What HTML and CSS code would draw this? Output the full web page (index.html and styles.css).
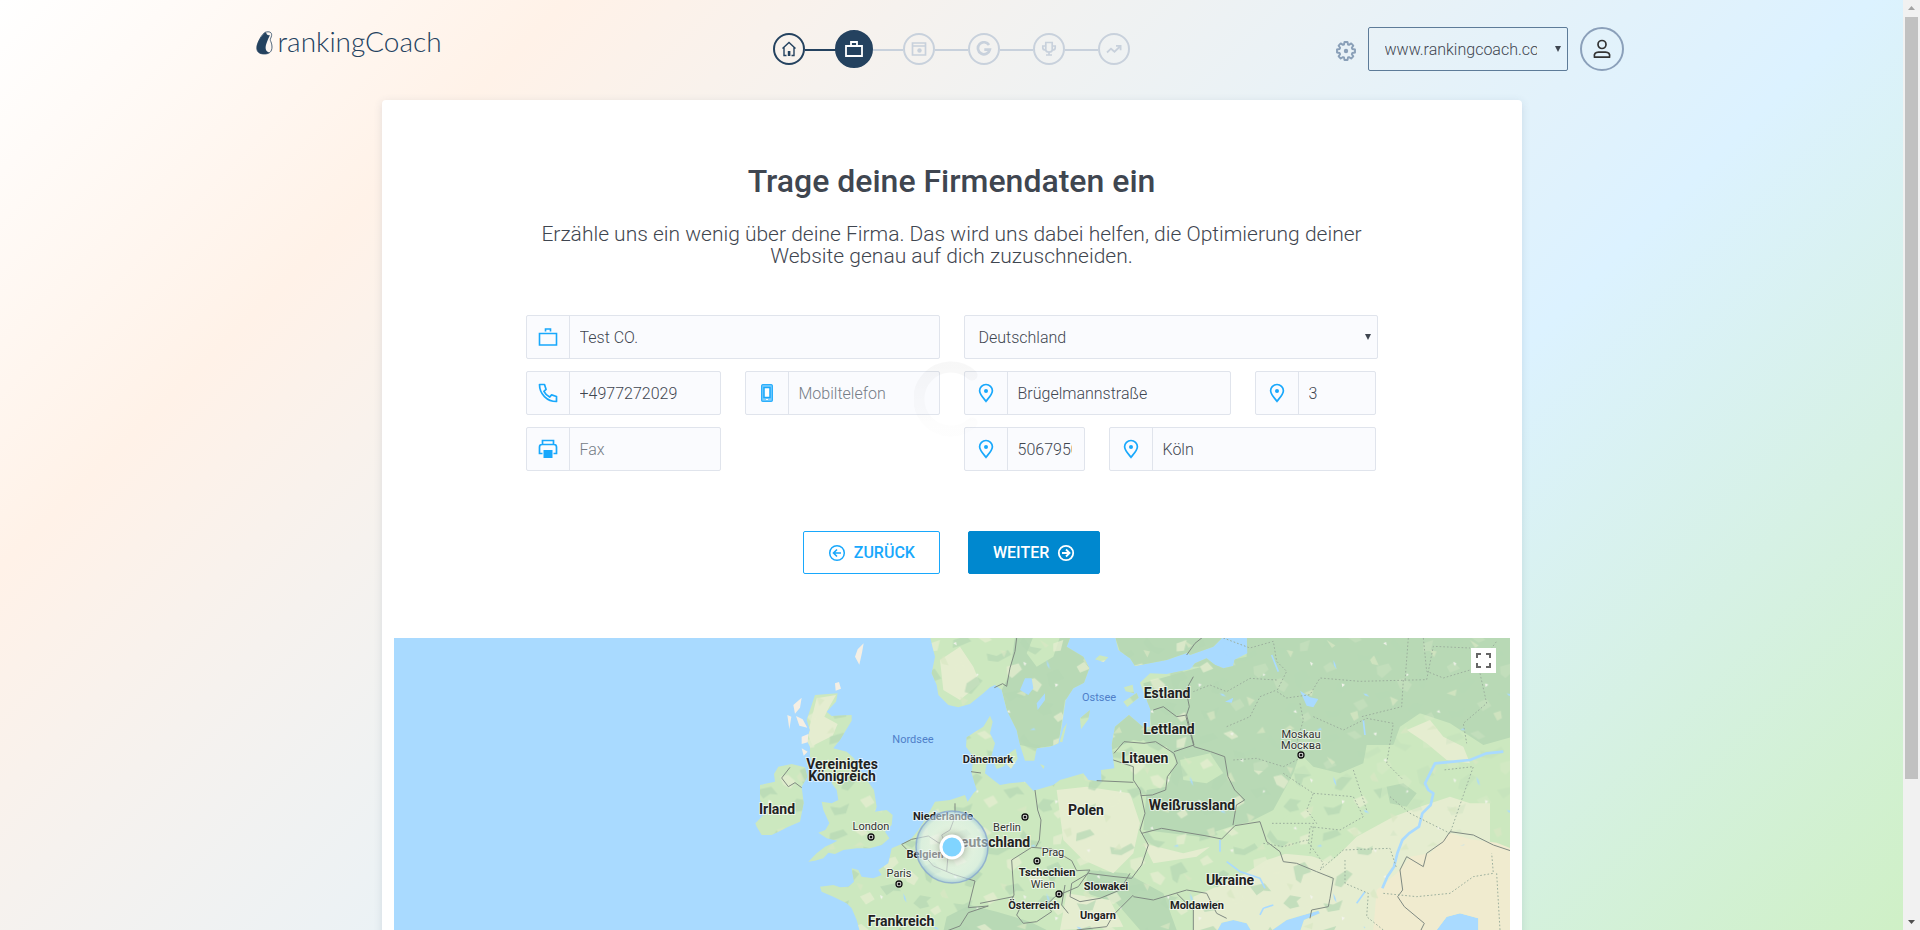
FILE: index.html
```html
<!DOCTYPE html>
<html lang="de">
<head>
<meta charset="utf-8">
<meta name="viewport" content="width=device-width, initial-scale=1">
<title>rankingCoach – Firmendaten</title>
<link rel="stylesheet" href="styles.css">
</head>
<body>
<svg class="sprite" aria-hidden="true">
  <symbol id="briefcase" viewBox="0 0 20 20"><path d="M1.500 6.500h17v11.500h-17z M7.500 4.500V2h5v2.500" fill="none" stroke="currentColor" stroke-width="1.600"/></symbol>
  <symbol id="phone" viewBox="0 0 20 20"><path d="M1.500 1.500h5l1.600 4.900-2.200 2c1.200 2.400 3.200 4.400 5.700 5.700l2-2.200 4.900 1.600v5C9 18.500 1.500 11 1.500 1.500z" fill="none" stroke="currentColor" stroke-width="1.700" stroke-linejoin="round"/></symbol>
  <symbol id="mobile" viewBox="0 0 20 20"><path d="M5.500 1h9a1.500 1.500 0 0 1 1.500 1.500v15a1.500 1.500 0 0 1-1.500 1.500h-9A1.500 1.500 0 0 1 4 17.500v-15A1.500 1.500 0 0 1 5.500 1z" fill="currentColor" opacity=".55"/><rect x="4.700" y="1.700" width="10.600" height="16.600" rx="1" fill="none" stroke="currentColor"/><rect x="7" y="4.500" width="6" height="10" fill="#fff" stroke="currentColor" stroke-width="1.500"/><rect x="9" y="16" width="2" height="1" fill="#fff"/></symbol>
  <symbol id="printer" viewBox="0 0 20 20"><path d="M4.500 5V1.500h11V5 M4.500 14.500h-3V8q0-2.500 2.500-2.500h12q2.500 0 2.500 2.500v6.500h-3" fill="none" stroke="currentColor" stroke-width="1.700"/><path d="M5.500 11h9v8h-9z" fill="currentColor"/></symbol>
  <symbol id="pin" viewBox="0 0 20 20"><path d="M10 18.300C6.500 14 3.600 11 3.600 7.700a6.400 6.200 0 0 1 12.800 0C16.400 11 13.500 14 10 18.300z" fill="none" stroke="currentColor" stroke-width="1.700"/><circle cx="10" cy="8" r="2" fill="currentColor"/></symbol>
</svg>

<div class="page">
  <header class="header">
    <a class="logo" href="#">
      <svg class="logo-mark" viewBox="0 0 17 24" aria-hidden="true"><path d="M9.500 1.200C13 .2 16 1 15.600 4.500c-.2 2-1.800 3.500-1.200 5 .5 1.300 1.600 3.500 1.600 6.500 0 4.500-2.500 7-7.600 7C3.500 23 .6 21 .8 16.500 1 12 6 2.500 9.500 1.200z" fill="#fdf6f1" stroke="#24425f" stroke-width=".8"/><path d="M9.500 1.200C7 2.500.8 11 .8 16.500.8 21.500 4 23 8 23c2.500 0 4-.5 5.200-1.600-3.200-.7-4.400-4-3-8.200C11.300 10 12.800 6.500 14 4c-1 .4-2.500.2-3.200-.8-.4-.7-.2-1.500-1.300-2z" fill="#24425f"/></svg>
      <span>rankingCoach</span>
    </a>

    <ol class="steps" aria-label="Einrichtung">
      <li class="step step-done"><svg viewBox="0 0 16 16" role="img" aria-label="Start"><path d="M1.500 7.500 8 1.500l6.500 6 M3 6.500v8h2.500 M13 6.500v8h-2.500" fill="none" stroke="currentColor" stroke-width="1.400"/><path d="M6.800 10h2.600v5H6.800z" fill="currentColor"/></svg></li>
      <li class="step step-active" aria-current="step"><svg viewBox="0 0 20 20" role="img" aria-label="Firma"><path d="M2 7h16v10H2z M7 6V3h6v3" fill="none" stroke="currentColor" stroke-width="1.800"/></svg></li>
      <li class="step"><svg viewBox="0 0 16 16" role="img" aria-label="Website"><path d="M1.500 2h13v12h-13z M1.500 5h13" fill="none" stroke="currentColor" stroke-width="1.700"/><circle cx="8.500" cy="9.500" r="2.200" fill="currentColor"/></svg></li>
      <li class="step"><svg viewBox="0 0 16 16" role="img" aria-label="Suche"><path d="M13 4a6 6 0 1 0 .8 4.600H8.300" fill="none" stroke="currentColor" stroke-width="2.700"/></svg></li>
      <li class="step"><svg viewBox="0 0 16 16" role="img" aria-label="Ziele"><path d="M4.800 1.500h6.400V9q0 2-3.200 2T4.800 9z M4.500 5H1.800v2q0 2 3 2 M11.500 5h2.700v2q0 2-3 2 M8 11v3 M5 14h6" fill="none" stroke="currentColor" stroke-width="1.700"/></svg></li>
      <li class="step"><svg viewBox="0 0 16 16" role="img" aria-label="Ergebnis"><path d="M1 11.500 5 7.700l3.500 3L14 5.500 M10 4.800h4.600v4.500" fill="none" stroke="currentColor" stroke-width="1.800"/></svg></li>
    </ol>

    <div class="account">
      <button class="gear" type="button" aria-label="Einstellungen">
        <svg viewBox="0 0 20 20" aria-hidden="true"><path d="M8.500 1h3l.5 2.500 1 .4 2.200-1.500 2.100 2.200-1.500 2.200.5 1.200 2.700.5v3l-2.700.5-.5 1.200 1.500 2.200-2.100 2.100-2.200-1.400-1 .4-.5 2.500h-3L8 16.500l-1.100-.4-2.200 1.400-2.100-2.100 1.500-2.200-.5-1.200L1 11.500v-3L3.600 8l.5-1.200-1.500-2.200 2.100-2.200 2.200 1.500 1.100-.4z" fill="none" stroke="currentColor" stroke-width="1.900" stroke-linejoin="round"/><circle cx="10" cy="10" r="2.200" fill="currentColor"/></svg>
      </button>
      <div class="select-wrap">
        <select class="site-select" aria-label="Website"><option>www.rankingcoach.com</option></select>
      </div>
      <button class="user" type="button" aria-label="Konto">
        <svg viewBox="0 0 20 20" aria-hidden="true"><circle cx="10" cy="5.500" r="4" fill="none" stroke="currentColor" stroke-width="1.700"/><path d="M2.500 18.200c-.8-3.400 1-5 4-5h7c3 0 4.800 1.600 4 5z" fill="none" stroke="currentColor" stroke-width="1.700"/></svg>
      </button>
    </div>
  </header>

  <main class="card">
    <h1 class="title">Trage deine Firmendaten ein</h1>
    <p class="intro">Erzähle uns ein wenig über deine Firma. Das wird uns dabei helfen, die Optimierung deiner Website genau auf dich zuzuschneiden.</p>

    <form class="form">
      <div class="columns">
        <div class="column contact">
          <label class="field wide"><span class="icon"><svg><use href="#briefcase"/></svg></span><input type="text" aria-label="Firma" value="Test CO."></label>
          <label class="field"><span class="icon"><svg><use href="#phone"/></svg></span><input type="tel" aria-label="Telefon" value="+4977272029"></label>
          <label class="field"><span class="icon"><svg><use href="#mobile"/></svg></span><input type="tel" aria-label="Mobiltelefon" placeholder="Mobiltelefon"></label>
          <label class="field"><span class="icon"><svg><use href="#printer"/></svg></span><input type="tel" aria-label="Fax" placeholder="Fax"></label>
        </div>
        <div class="column address">
          <div class="select-wrap">
            <select class="country-select" aria-label="Land"><option>Deutschland</option></select>
          </div>
          <div class="address-row street-row">
            <label class="field"><span class="icon"><svg><use href="#pin"/></svg></span><input type="text" aria-label="Straße" value="Brügelmannstraße"></label>
            <label class="field"><span class="icon"><svg><use href="#pin"/></svg></span><input type="text" aria-label="Hausnummer" value="3"></label>
          </div>
          <div class="address-row town-row">
            <label class="field"><span class="icon"><svg><use href="#pin"/></svg></span><input type="text" aria-label="Postleitzahl" value="5067950"></label>
            <label class="field"><span class="icon"><svg><use href="#pin"/></svg></span><input type="text" aria-label="Ort" value="Köln"></label>
          </div>
        </div>
        <svg class="spinner" viewBox="0 0 76 76" aria-hidden="true">
          <defs><linearGradient id="fade" x1="0" y1="0" x2="0" y2="1"><stop offset="0" stop-opacity=".03"/><stop offset="1" stop-opacity=".006"/></linearGradient></defs>
          <path d="M58 14A32 32 0 1 0 58 62" fill="none" stroke="url(#fade)" stroke-width="11" stroke-linecap="round"/>
        </svg>
      </div>

      <div class="actions">
        <button class="btn btn-outline" type="button">
          <svg viewBox="0 0 18 18" aria-hidden="true"><circle cx="9" cy="9" r="7.300" fill="none" stroke="currentColor" stroke-width="1.500"/><path d="M13 9H5.500 M9 5.500 5.500 9 9 12.500" fill="none" stroke="currentColor" stroke-width="1.600"/></svg>
          <span>ZURÜCK</span>
        </button>
        <button class="btn btn-primary" type="submit">
          <span>WEITER</span>
          <svg viewBox="0 0 18 18" aria-hidden="true"><circle cx="9" cy="9" r="7.200" fill="none" stroke="currentColor" stroke-width="1.800"/><path d="M5 9h7.500 M9 5.500l3.500 3.500L9 12.500" fill="none" stroke="currentColor" stroke-width="1.900"/></svg>
        </button>
      </div>
    </form>

    <div class="map">
      <svg class="map-canvas" viewBox="0 0 1116 418" preserveAspectRatio="xMidYMin slice" role="img" aria-label="Karte von Europa">
        <defs>
          <pattern id="shards" width="370" height="290" patternUnits="userSpaceOnUse">
            <path fill="#b6d8b4" opacity=".7" d="M20 30l40-12 14 16-30 12-26 8zM120 70l30 8 34-18 10 14-40 22-30-4zM230 20l22 30 34 6-20 18-30-16-16-20zM300 130l34-14 20 30-24 8-8 26-14-10zM60 160l30-20 18 12-34 40-20-6zM170 190l44-10 20 24-24-2-20 14zM20 240l30 4 28-14-10 30-34 6zM270 240l20-24 34 6-14 12 8 16-28 6z"/>
            <path fill="#e5edd0" opacity=".75" d="M90 20l24-8 22 18-20 8zM180 110l36-10 10 18-30 26-14-12zM20 110l22-14 18 20-30 12zM240 150l24-6 22 20-14 22-22-12zM110 220l30-14 14 22-26 16zM320 40l30-10-8 32-22 2zM320 260l24-14 10 18-20 12z"/>
          </pattern>
          <pattern id="flecks" width="430" height="350" patternUnits="userSpaceOnUse">
            <path fill="#d9e8c4" opacity=".7" d="M40 60l20 4-8 18zM160 30l26 16-10 8zM290 90l12-14 14 30-20-4zM90 190l30-12-4 20zM230 250l22-8 4 22-14 8zM350 200l24 10-16 18zM30 300l20-14 14 10zM380 310l18-20 8 18z"/>
            <path fill="#f4f4ee" d="M110 95l9 5-5 8zM330 40l8-4 2 10zM205 160l10 4-8 7zM60 245l7-5 4 9zM300 310l10-3-2 10zM400 130l6 4-7 5z"/>
            <path fill="#a9daff" d="M180 90l6 12 4 16-8-12zM270 190l10 2 8 8-12-3zM130 300l12-6 4 6z"/>
          </pattern>
          <path id="land" d="M480 905L470 870 455 835 440 820 400 800 365 785 360 770 400 765 420 772 445 770 462 755 455 715 475 720 485 740 520 745 545 735 535 720 565 700 575 655 610 640 635 625 655 600 680 560 705 515 750 510 795 495 803 515 820 490 830 480 815 430 820 380 798 350 800 322 850 290 870 257 878 275 870 310 885 340 875 375 860 400 855 430 880 450 900 465 930 460 975 455 1000 482 1060 465 1080 450 1150 430 1165 450 1205 455 1203 420 1243 415 1235 345 1245 290 1287 255 1330 292 1350 290 1352 240 1328 180 1320 158 1350 130 1400 132 1470 118 1485 100 1520 85 1545 105 1570 115 1600 108 1605 80 1640 70 1640 20H2440V905H2335L2335 865 2280 850 2240 860 2210 900 1800 905 1812 870 1860 850 1855 842 1810 855 1760 870 1710 905H1655L1640 880 1600 870 1565 878 1550 905z
            M690 20L705 80 695 130 710 165 715 195 745 225 775 232 810 222 850 190 870 172 885 165 905 180 920 240 950 300 960 345 975 392 1003 392 1010 355 1050 350 1075 340 1085 290 1097 210 1120 175 1152 158 1168 115 1150 80 1100 50 1112 20z
            M1245 20L1255 60 1290 85 1305 108 1400 90 1462 68 1470 75 1540 50 1570 20z
            M345 195L413 190 408 215 380 245 395 258 455 255 455 272 435 305 420 330 400 355 440 365 462 385 480 420 500 450 522 480 530 530 525 545 560 540 578 555 575 585 555 605 568 625 545 645 510 655 470 655 430 660 405 672 385 668 370 685 345 692 325 695 350 670 375 650 398 640 412 632 380 625 355 608 376 600 388 580 370 540 365 515 395 520 415 510 410 480 395 460 400 440 360 430 345 400 330 380 330 350 320 330 330 300 320 270 330 240z
            M235 410L275 402 315 412 322 440 305 470 311 520 300 575 265 590 215 615 185 615 170 590 166 580 200 545 180 510 180 465 225 455 222 432z
            M1140 265l30-25-5 28-22 30zM880 395l25-18 10 30-25 10zM925 372l22-16 6 30-20 30-14-14zM1272 172l26-8 4 26-25-6zM1270 215l40-26 6 14-34 28zM1185 88l14-12 26 6-14 14z"/>
          <clipPath id="landclip"><use href="#land"/></clipPath>
          <radialGradient id="halo"><stop offset=".3" stop-color="#fff" stop-opacity=".5"/><stop offset=".86" stop-color="#e6f5f5" stop-opacity=".55"/><stop offset="1" stop-color="#9cc4e4" stop-opacity=".6"/></radialGradient>
        </defs>
        <rect width="1116" height="418" fill="#a9daff"/>
        <g transform="translate(306 -8) scale(.33333)">
          <use href="#land" fill="#cce8bf"/>
          <path fill="#cce8bf" d="M1500 900h940v400H360l90-400z"/>
          <g clip-path="url(#landclip)">
            <path fill="#b8d9b5" d="M1330 160L1470 120 1545 100 1640 80 1640 20H2440V320L2350 345 2250 280 2160 250 2100 290 2080 345 2000 345 1990 400 1920 430 1840 410 1800 370 1780 430 1720 540 1650 575 1590 590 1500 620 1330 600 1340 480 1400 470 1430 390 1400 350 1300 330 1235 360V280l50-30 50 40h20z"/>
            <path fill="#b8d9b5" d="M945 20H1180V170L1095 210 1075 345 1010 355 960 345 920 240 905 180 930 130zM1245 20h330v90h-300zM1160 720l120 10 110 60 40 110H1320l-70-80-90-30zM740 860l70-35 80 20 100 30 60 30H730zM2060 470l50-10 40 30-30 40-50-10z"/>
            <path fill="#e5edd0" d="M1070 480l90-10 130 20 30 90-20 90-60 60-90-40-60-60zM1100 790l130 20 40 80-190 10zM1330 640l120 30 80-20-40 30-130 20zM1480 800l140-60 80-50 90-30 100 40 80-80 110-60 80-30 90-30 60 20h60V900H1480zM350 205l58-10-20 35-15 30 40 22-15 35-60 30-15-35zM720 90l60-40 40 60 20 50-60 50-50-30zM2120 300l70-30 40 50 60 30 20 50-70-10-60-50zM1160 100l60-10 30 40-60 10z"/>
            <path fill="#cce8bf" d="M1000 20h80l-20 60-50 30-30-40zM1250 370l80-40 80 30 10 50-40 60-90 10zM1440 390l90-20 40 60-50 30-70-10zM1700 600l90-60 120 40 40 60-100 40-110-10z"/>
            <path fill="#f0ebcf" d="M2250 608l60 20 80 10 50 20V900H2020l10-120 60-50 40-50 60-10z"/>
            <path fill="url(#shards)" d="M0 0h1500L1650 420 2050 450 2010 700 1900 905H0z"/>
            <path fill="url(#shards)" opacity=".3" d="M1500 0h940v600l-430 20 40-170-400-30z"/>
            <path fill="url(#flecks)" d="M0 0h2440v620l-350 60-100 225H0z"/>
          </g>
          <path fill="#a9daff" d="M960 180l15-35 20 0 5 30-15 20zM1010 220l25-30 0 20-22 30zM1800 182l30 20 25 5-15 25-20-5zM1570 20h70l2 50-40 20-30-20-5-30zM1575 215l25-12-5 15z"/>
          <path fill="#f5efe4" d="M465 80l8-22 18-18-5 28-8 36zM280 225l25-22-5 30-15 18zM262 255l12 5-6 38zM288 258l20 10 14 25-24-6zM305 320l20-8-2 25-18 5zM405 160l12-4 6 20-16 6zM305 355l18 10-12 12z"/>
          <path fill="#cce8bf" d="M1079 335l12-40 10-16-14 58zM1020 402l14 6-4 9z"/>
          <g fill="none" stroke="#a9daff" stroke-width="8" stroke-linejoin="round"><path d="M2410 365l-50 5-50 20-50 5-55 5-15 30-15 30 10 20 15 10-8 35-25 25-10 40-30 20-20 20-15 40-10 40-20 30-15 35" /><path d="M1560 630v35M1580 695l40 30 60 20 15 30M1680 855l10-20 30-10M1990 270l5 45M1715 75l20 50M1970 820l25-35" stroke-width="5"/></g>
          <g fill="none" stroke="#7f8a82" stroke-width="3" stroke-linejoin="round">
            <path d="M950 24l-5 40-15 50-10 55-12-8-25 12M1005 480l8 60 10 30-5 60-10 20M935 690l60-38 60 5 60 35 15 30 40-2-35 50-70 30-25 25 15 20-45 30-40 5-20-25 12-25-30-15 10-20zM1095 765l-10 60 20 25M1165 730l80 10 50 5 30-40 20-60-25-45 15-50-15-70-20-30 0-40-60-20M1190 452l110 5M1242 370l30-35 60 5 35-5 55 35 10 30-30 40-5 40-40 15-35 2M1360 240l30-10 40 30 30-5 22 90-60 20M1480 140l-22 40 10 50-10 30 24 90 50 15 42 15 10 60 20 40 30 30-25 15-10 60M1325 610l60-15 70 12 60 10 50 10 40-40 75-12 20 60 40 30 10 30 40 5 60 25 50 20-10 60-5 25-50 10-5 25M2440 665l-60-20-60-30-70-10-20 30-50 35-10 40-50-30-20 40 8 60-15 20 20 30 60 50-10 20 40 20"/>
            <path d="M1165 730l-50 30-5 40 30 15 60-10 60-25 30-50M1300 795l-60 60-20 35-90 10M1300 800l60 10 100-30 60 10 30 60 30 15M1430 790l50 50 0 60M635 628l50-10 30 20 40 10M635 628l-30 15 20 20 40 5 35 40 60 25 65 20-20 80 60-5-60 20-25 40-40 15-20 30M765 520v40l-15 40-25 15 20 50-5 60M940 800l-100 20M270 412l-25 32 20 26 20-12 20 15M813 425l30 4M1460 75l25-35 25-20"/>
          </g>
          <g fill="none" stroke="#9caf9d" stroke-width="3" stroke-dasharray="5 6">
            <path d="M1570 24l80 30 70-20 10 60 30 30-30 60 30 20 70-10 30-50 120 10 200-5 20-100 110 5M1730 150l-80-5-70 40-50-20-50 20M1580 290l70-30 30-60 50-20M1800 220l10 50-20 70 20 40-60 30-80-25-70 5M1840 260l90 40 70-35 80 15-20 120 50 50M2110 150l-5 80-120 30M2125 24l-10 130M2170 24l10 100 50 20 100-30 60-80M2340 130l20 90-70 60 10 60M1750 430l90 60-20 50 30 40-140 0M1840 490l120 10 30 60-70 40-90-10-5 50M1960 420l40 120M2070 500l60 50 120 60 70-200-90 10M1690 640l60 10 70-20 50 70-10 20 70-60 140-5 20 60M1935 690l0 70 70 30-5 70 50 40M2050 790l100 10 100-10 70-50 60-10-5-60M2390 730l10 170M1840 590l-10 80"/>
          </g>
        </g>
        <g class="places">
          <g class="country">
            <text x="448" y="131">Vereinigtes</text><text x="448" y="143">Königreich</text><text x="383" y="176">Irland</text><text x="507" y="288">Frankreich</text><text x="597" y="209">Deutschland</text><text x="692" y="177">Polen</text><text x="773" y="60">Estland</text><text x="775" y="96">Lettland</text><text x="751" y="125">Litauen</text><text x="798" y="172">Weißrussland</text><text x="836" y="247">Ukraine</text>
          </g>
          <g class="country small">
            <text x="594" y="125">Dänemark</text><text x="549" y="182">Niederlande</text><text x="531" y="220">Belgien</text><text x="653" y="238">Tschechien</text><text x="640" y="271">Österreich</text><text x="712" y="252">Slowakei</text><text x="704" y="281">Ungarn</text><text x="803" y="271">Moldawien</text>
          </g>
          <g class="city">
            <text x="477" y="192">London</text><text x="505" y="239">Paris</text><text x="613" y="193">Berlin</text><text x="659" y="218">Prag</text><text x="649" y="250">Wien</text><text x="907" y="100">Moskau</text><text x="907" y="111">Москва</text>
          </g>
          <g class="sea"><text x="519" y="105">Nordsee</text><text x="705" y="63">Ostsee</text></g>
          <g fill="#fff" stroke="#111" stroke-width="1.300"><circle cx="477" cy="199" r="3"/><circle cx="505" cy="246" r="3"/><circle cx="631" cy="179" r="3"/><circle cx="643" cy="223" r="3"/><circle cx="665" cy="256" r="3"/><circle cx="907" cy="117" r="3"/></g>
          <g fill="#111"><circle cx="477" cy="199" r="1.500"/><circle cx="505" cy="246" r="1.500"/><circle cx="631" cy="179" r="1.500"/><circle cx="643" cy="223" r="1.500"/><circle cx="665" cy="256" r="1.500"/><circle cx="907" cy="117" r="1.500"/></g>
        </g>
        <circle cx="558" cy="209" r="36" fill="url(#halo)" stroke="#7f9fd0" stroke-opacity=".7" stroke-width="1.500"/>
        <circle class="marker" cx="558" cy="209" r="11" fill="#80d4ff" stroke="#fff" stroke-width="3"/>
      </svg>
      <button class="fullscreen" type="button" aria-label="Vollbild">
        <svg viewBox="0 0 15 15" aria-hidden="true"><path d="M1 5V1h4 M10 1h4v4 M14 10v4h-4 M5 14H1v-4" fill="none" stroke="#666" stroke-width="2"/></svg>
      </button>
    </div>
  </main>
</div>

<div class="scrollbar" aria-hidden="true">
  <svg viewBox="0 0 17 17"><path d="M5 10l3.500-4 3.500 4z" fill="#a3a3a3"/></svg>
  <div class="track"><div class="thumb"></div></div>
  <svg viewBox="0 0 17 17"><path d="M5 7l3.500 4L12 7z" fill="#505050"/></svg>
</div>
</body>
</html>
```
FILE: styles.css
```css
* { box-sizing: border-box; }

body {
  margin: 0;
  height: 100vh;
  display: flex;
  overflow: hidden;
  font-family: Roboto, "Liberation Sans", sans-serif;
  font-weight: 300;
  font-size: 16px;
  color: #3f4650;
}

button, input, select { font: inherit; color: inherit; }
button { cursor: pointer; }
.sprite { position: absolute; width: 0; height: 0; }

.page {
  flex: 1;
  min-width: 0;
  overflow: hidden;
  background: linear-gradient(135deg, #fff 0%, #fff2e8 20%, #dcf2ff 66%, #cff0c6 100%);
}

/* Header */
.header {
  display: grid;
  grid-template-columns: 1fr auto 1fr;
  align-items: start;
  max-width: 1440px;
  height: 100px;
  margin: 0 auto;
  padding: 27px 24px 0;
}

.logo {
  display: flex;
  align-items: center;
  gap: 5px;
  height: 32px;
  color: #24425f;
  font-family: Lato, sans-serif;
  font-weight: 300;
  font-size: 28px;
  line-height: 32px;
  text-decoration: none;
}
.logo span { padding-bottom: 4px; }
.logo-mark { width: 17px; height: 24px; }

.steps {
  display: flex;
  gap: 33px;
  margin: 6px 0 0;
  padding: 0;
  list-style: none;
}
.step {
  position: relative;
  display: flex;
  align-items: center;
  justify-content: center;
  width: 32px;
  height: 32px;
  border: 2px solid;
  border-radius: 50%;
  color: #c8d1dc;
}
.step svg { width: 16px; height: 16px; }
.step:not(:last-child)::after {
  content: "";
  position: absolute;
  left: 30px;
  top: 14px;
  width: 33px;
  height: 2px;
  background: currentColor;
}
.step-done { color: #24425f; }
.step-active {
  z-index: 1;
  width: 38px;
  height: 38px;
  margin: -3px;
  border-color: #24425f;
  background: #24425f;
  color: #fff;
}
.step-active svg { width: 20px; height: 20px; }
.step.step-active::after { left: 36px; top: 17px; width: 30px; background: #c8d1dc; }

.account {
  display: flex;
  justify-content: flex-end;
  align-items: center;
  gap: 12px;
  padding-right: 24px;
}
.gear {
  display: flex;
  margin-top: 3px;
  padding: 0;
  border: 0;
  background: none;
  color: #8aa0b8;
}
.gear svg { width: 20px; height: 20px; }

.select-wrap { position: relative; }
.select-wrap::after {
  content: "";
  position: absolute;
  right: 7px;
  top: 19px;
  border: 3px solid transparent;
  border-top: 6px solid #3f4650;
  border-bottom: 0;
  pointer-events: none;
}
.select-wrap select {
  appearance: none;
  display: block;
  width: 100%;
  height: 44px;
  border: 1px solid #e0e4ec;
  border-radius: 2px;
  background: #fafbfe;
  padding: 0 14px;
}
.select-wrap .site-select {
  width: 200px;
  padding: 0 30px 0 16px;
  border-color: #5d7b98;
  background: transparent;
}

.user {
  display: flex;
  align-items: center;
  justify-content: center;
  width: 44px;
  height: 44px;
  padding: 0;
  border: 2px solid #8ba0ba;
  border-radius: 50%;
  background: none;
  color: #333;
}
.user svg { width: 20px; height: 20px; }

/* Card */
.card {
  max-width: 1140px;
  margin: 0 auto;
  padding: 63px 12px 12px;
  border-radius: 4px;
  background: #fff;
  box-shadow: 0 2px 8px rgba(60, 80, 110, .14);
}
.title {
  margin: 0;
  font-weight: 500;
  font-size: 32px;
  line-height: 36px;
  text-align: center;
}
.intro {
  max-width: 840px;
  margin: 24px auto 0;
  font-size: 21px;
  line-height: 22px;
  text-align: center;
}

/* Form */
.form { max-width: 852px; margin: 48px auto 0; }
.columns {
  position: relative;
  display: grid;
  grid-template-columns: 1fr 1fr;
  gap: 24px;
}
.column { display: grid; gap: 12px; align-content: start; }
.contact { grid-template-columns: 1fr 1fr; column-gap: 24px; }
.wide { grid-column: 1 / -1; }
.address-row { display: grid; gap: 24px; padding-right: 2px; }
.street-row { grid-template-columns: 1fr 121px; }
.town-row { grid-template-columns: 121px 1fr; }

.field {
  display: flex;
  min-width: 0;
  height: 44px;
  border: 1px solid #e0e4ec;
  border-radius: 2px;
  background: #fafbfe;
}
.icon {
  display: flex;
  align-items: center;
  justify-content: center;
  flex: none;
  width: 43px;
  border-right: 1px solid #e0e4ec;
  color: #18a8fc;
}
.icon svg { width: 20px; height: 20px; }
.field input {
  flex: 1;
  width: 0;
  min-width: 0;
  padding: 0;
  margin: 0 12px 0 10px;
  border: 0;
  outline: 0;
  background: none;
}
.field input::placeholder { color: #757c86; opacity: 1; }

.spinner {
  position: absolute;
  left: 50%;
  top: 46px;
  width: 76px;
  height: 76px;
  margin-left: -38px;
  pointer-events: none;
}

.actions {
  display: flex;
  justify-content: center;
  gap: 28px;
  margin-top: 60px;
}
.btn {
  display: flex;
  align-items: center;
  gap: 8px;
  height: 43px;
  padding: 0 24px;
  border: 1px solid #18a8fc;
  border-radius: 2px;
  background: #fff;
  color: #18a8fc;
  font-weight: 500;
}
.btn svg { width: 18px; height: 18px; }
.btn-primary {
  border-color: #0088cf;
  background: #0088cf;
  color: #fff;
}

/* Map */
.map { position: relative; margin-top: 64px; }
.map-canvas { display: block; width: 100%; }
.places text { text-anchor: middle; paint-order: stroke; }
.country {
  font-size: 14px;
  font-weight: 700;
  fill: #222;
  stroke: rgba(255, 255, 255, .6);
  stroke-width: 2px;
}
.country.small { font-size: 11px; }
.city {
  font-size: 11px;
  font-weight: 400;
  fill: #333;
  stroke: rgba(255, 255, 255, .6);
  stroke-width: 2px;
}
.sea { font-size: 11px; font-weight: 400; fill: #4f7fc9; }
.marker { filter: drop-shadow(0 0 4px rgba(0, 0, 0, .35)); }
.fullscreen {
  position: absolute;
  top: 10px;
  right: 14px;
  display: flex;
  align-items: center;
  justify-content: center;
  width: 25px;
  height: 25px;
  padding: 0;
  border: 0;
  background: #fff;
}
.fullscreen svg { width: 15px; height: 15px; }

/* Scrollbar */
.scrollbar {
  display: flex;
  flex-direction: column;
  width: 17px;
  background: #f1f1f1;
}
.scrollbar svg { width: 17px; height: 17px; }
.track { flex: 1; padding: 0 2px; }
.thumb { height: 85%; background: #c1c1c1; }
```
